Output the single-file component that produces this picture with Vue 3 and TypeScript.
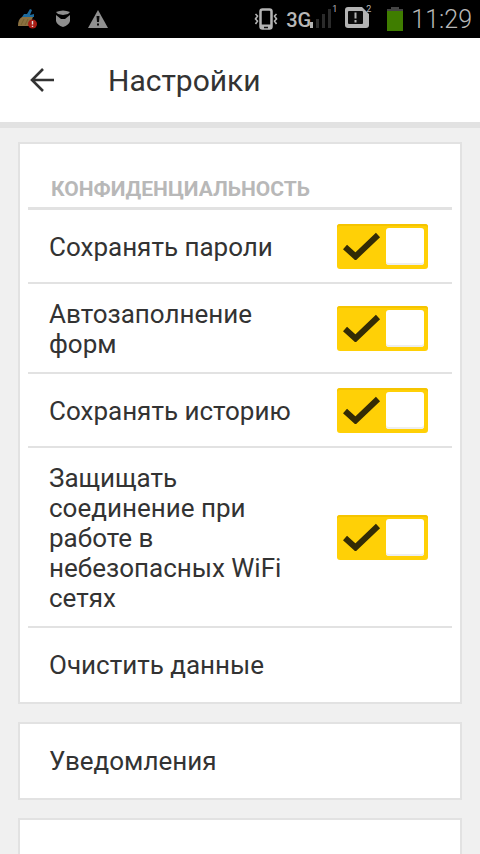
<script setup lang="ts">
import { ref } from 'vue'

interface ToggleSetting {
  id: string
  label: string
  enabled: boolean
}

const settings = ref<ToggleSetting[]>([
  { id: 'passwords', label: 'Сохранять пароли', enabled: true },
  { id: 'autofill', label: 'Автозаполнение форм', enabled: true },
  { id: 'history', label: 'Сохранять историю', enabled: true },
  { id: 'wifi', label: 'Защищать соединение при работе в небезопасных WiFi сетях', enabled: true },
])
</script>

<template>
  <div class="screen">
    <div class="status">
      <div class="notifications">
        <svg width="20" height="20" viewBox="0 0 20 20" aria-hidden="true">
          <path d="M4 8C1 9.500 0 13 0 17h11l4-9z" fill="#8a7040" />
          <path d="M3 16l3-6M7 16l3-6" stroke="#75602f" />
          <path d="M9 5l3-5 2 1-2 5 4-1v3H4L6 5z" fill="#1c6a9c" />
          <circle cx="14.500" cy="15" r="4.500" fill="#a91c15" />
          <path d="M14.500 12v3.500M14.500 16.700v1.300" stroke="#ddd" stroke-width="1.400" />
        </svg>
        <svg width="14" height="18" viewBox="0 0 14 18" fill="#8f8f8f" aria-hidden="true">
          <path d="M0 2Q7-1 14 2L12 4 7 5 2 4z" />
          <path d="M0 5l5 4h4l5-4v6q-1 4-7 6-6-2-7-6z" />
        </svg>
        <svg width="20" height="18" viewBox="0 0 20 18" aria-hidden="true">
          <path d="M10 0l10 18H0z" fill="#8f8f8f" />
          <path d="M8.500 6h3l-.5 6H9zM9 13.500h2v2H9z" fill="#080808" />
        </svg>
      </div>
      <div class="system">
        <svg width="24" height="24" viewBox="0 0 24 24" fill="none" stroke="#b4b4b4" aria-hidden="true">
          <rect x="6.500" y="2.500" width="11" height="19" rx="2" stroke-width="2.500" />
          <path d="M6 19.500h12" stroke-width="4" />
          <path d="M10 20.500h4" stroke="#111" stroke-width="1.500" />
          <path d="M1.500 7l2 2-2 3 2 2-2 3M22.500 7l-2 2 2 3-2 2 2 3" stroke-width="1.600" />
        </svg>
        <div class="network">
          <span class="network-type">3G</span>
          <svg width="22" height="21" viewBox="0 0 22 21" aria-hidden="true">
            <path d="M1.500 21v-6" stroke="#b4b4b4" stroke-width="3" />
            <path d="M7.500 21V12M13.500 21V7M19.500 21V2" stroke="#2b2b2b" stroke-width="3" />
          </svg>
          <span class="slot">1</span>
        </div>
        <div class="network">
          <svg width="24" height="21" viewBox="0 0 24 21" aria-hidden="true">
            <path d="M3 0h14l7 7v11q0 3-3 3H3q-3 0-3-3V3q0-3 3-3z" fill="#b4b4b4" />
            <rect x="3" y="4" width="15" height="13" rx="1" fill="#0b0b0b" />
            <path d="M10.500 5.500v6M10.500 13v2.500" stroke="#b4b4b4" stroke-width="2" />
          </svg>
          <span class="slot slot-over">2</span>
        </div>
        <svg class="battery" width="16" height="24" viewBox="0 0 16 24" aria-hidden="true">
          <path d="M4 0h8v2h4v3H0V2h4z" fill="#444" />
          <path d="M0 4h16v20H0z" fill="#3f7d00" />
        </svg>
        <time class="clock">11:29</time>
      </div>
    </div>

    <header class="header">
      <button class="back" type="button" aria-label="Назад">
        <svg width="24" height="24" viewBox="0 0 24 24" fill="none" stroke="#333" stroke-width="2.600" aria-hidden="true">
          <path d="M13 1L2 12l11 11M2 12h22" />
        </svg>
      </button>
      <h1 class="title">Настройки</h1>
    </header>

    <main class="content">
      <section class="card">
        <h2 class="section-title">КОНФИДЕНЦИАЛЬНОСТЬ</h2>
        <div v-for="item in settings" :key="item.id" class="row divided">
          <label class="label" :for="item.id">{{ item.label }}</label>
          <span class="toggle">
            <input :id="item.id" v-model="item.enabled" class="toggle-input" type="checkbox" />
            <svg v-if="item.enabled" class="check" width="38" height="28" viewBox="0 0 38 28" fill="none" stroke="#332b05" stroke-width="6" aria-hidden="true">
              <path d="M2 15L12.500 24.500 35 3" />
            </svg>
          </span>
        </div>
        <a class="row" href="#clear">Очистить данные</a>
      </section>
      <section class="card">
        <a class="row" href="#notifications">Уведомления</a>
      </section>
      <section class="card card-rest"></section>
    </main>
  </div>
</template>

<style>
body {
  margin: 0;
}
</style>

<style scoped>
.screen {
  display: flex;
  flex-direction: column;
  height: 100vh;
  overflow: hidden;
  background: #f0f0f0;
  color: #333;
  font-family: Roboto, "Noto Sans", sans-serif;
}

.status {
  display: flex;
  flex: none;
  align-items: center;
  justify-content: space-between;
  height: 38px;
  padding: 0 8px 0 18px;
  background: #000;
  color: #b8b8b8;
}

.notifications {
  display: flex;
  align-items: center;
  gap: 18px;
}

.system {
  display: flex;
  align-items: center;
  gap: 8px;
}

.network {
  display: flex;
  align-items: flex-start;
  height: 24px;
}

.network-type {
  margin-right: -1px;
  font-size: 20px;
  font-weight: 500;
  line-height: 26px;
}

.slot {
  font-size: 9px;
  line-height: 4px;
}

.slot-over {
  margin-left: -3px;
}

.battery {
  margin-left: 8px;
}

.clock {
  padding-top: 2px;
  font-size: 25px;
  font-weight: 300;
  line-height: 36px;
}

.header {
  display: flex;
  flex: none;
  align-items: center;
  gap: 44px;
  height: 84px;
  padding: 0 20px;
  border-bottom: 6px solid #e2e2e2;
  background: #fff;
}

.back {
  display: flex;
  align-items: center;
  justify-content: center;
  width: 44px;
  height: 44px;
  padding: 0;
  border: 0;
  background: none;
}

.title {
  margin: 0;
  padding-top: 2px;
  font-size: 30px;
  font-weight: 400;
  line-height: 36px;
}

.content {
  display: flex;
  flex: 1;
  flex-direction: column;
  gap: 18px;
  padding: 14px 18px 0;
}

.card {
  padding: 0 8px;
  border: 2px solid #e2e2e2;
  background: #fff;
}

.card-rest {
  flex: 1;
  border-bottom: 0;
}

.section-title {
  margin: 0;
  padding: 33px 23px 6px;
  border-bottom: 3px solid #e2e2e2;
  color: #b8b8b8;
  font-size: 21px;
  font-weight: 700;
  line-height: 24px;
}

.row {
  display: flex;
  box-sizing: border-box;
  align-items: center;
  justify-content: space-between;
  gap: 24px;
  min-height: 74px;
  padding: 0 24px 0 21px;
  color: #333;
  font-size: 26px;
  line-height: 30px;
  text-decoration: none;
}

.divided {
  border-bottom: 2px solid #e2e2e2;
}

.label {
  flex: 1;
  padding: 15px 0 13px;
}

.toggle {
  position: relative;
  display: block;
  flex: none;
  width: 91px;
  height: 45px;
}

.toggle-input {
  display: flex;
  box-sizing: border-box;
  align-items: center;
  width: 100%;
  height: 100%;
  margin: 0;
  padding: 4px;
  border-radius: 3px;
  appearance: none;
  background: #ccc;
}

.toggle-input::before {
  width: 38px;
  height: 37px;
  border-radius: 3px;
  background: #fff;
  box-shadow: inset 0 -2px #eee;
  content: "";
}

.toggle-input:checked {
  justify-content: flex-end;
  background: #ffd006;
  box-shadow: inset 0 2px #f5c400;
}

.check {
  position: absolute;
  top: 8px;
  left: 6px;
  pointer-events: none;
}
</style>
